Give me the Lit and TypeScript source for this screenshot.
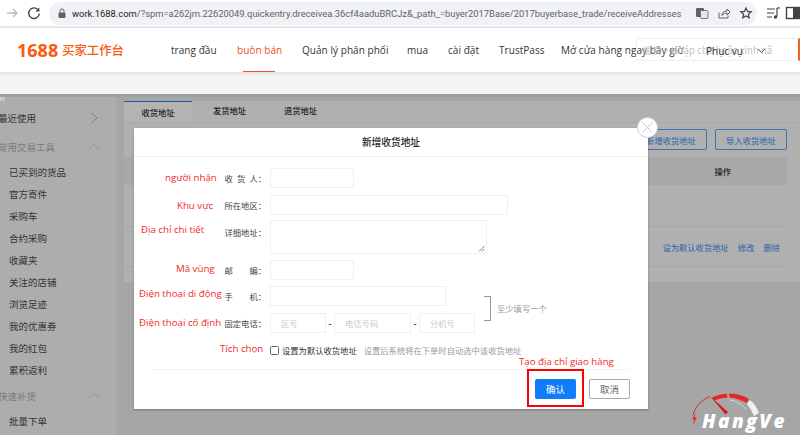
import { LitElement, html, css, svg } from "lit";
import { customElement } from "lit/decorators.js";

@customElement("app-root")
export class AppRoot extends LitElement {
  static styles = css`
    :host { display: block; width: 800px; height: 435px; overflow: hidden; position: relative; background: #a6a6a6; font-family: "Noto Sans CJK SC", "Liberation Sans", sans-serif; }
    .chrome { height: 28px; background: #fff; display: flex; align-items: center; box-sizing: border-box; border-bottom: 2px solid #e6e8eb; }
    .nav-ic { width: 16px; height: 16px; flex: none; }
    .ic-fw { margin-left: 4px; }
    .ic-rl { margin-left: 6px; }
    .omni { margin-left: 7px; flex: 1; height: 23px; background: #f0f2f5; border-radius: 12px; display: flex; align-items: center; padding: 0 4px 0 8px; min-width: 0; margin-right: 8px; }
    .url { font: 9.4px "Roboto", "Liberation Sans", sans-serif; color: #5f6368; white-space: nowrap; margin-left: 5px; flex: 1; overflow: hidden; min-width: 0; }
    .url b { font-weight: 400; color: #202124; }
    .omni-ic { width: 14px; height: 14px; margin-left: 8px; flex: none; }
    .ext { display: flex; gap: 4px; width: 35px; flex: none; overflow: hidden; }
    .header { height: 44px; background: #fff; display: flex; align-items: center; position: relative; box-shadow: 0 2px 4px rgba(0,0,0,.08); z-index: 1; }
    .logo { color: #f95a10; font: 700 18px "Open Sans", sans-serif; margin-left: 17px; width: 40px; }
    .logo-cn { color: #f95a10; font-size: 12.4px; margin-left: 5px; width: 109px; font-weight: 500; flex: none; }
    .hnav { display: flex; align-items: stretch; height: 100%; font: 10px "Open Sans", "Noto Sans", sans-serif; color: #333; letter-spacing: .05px; }
    .hnav a { display: flex; align-items: center; white-space: nowrap; position: relative; }
    .hnav a.on { color: #e8531c; }
    .hnav a.on::after { content: ""; position: absolute; left: 6px; width: 32px; bottom: 0; height: 1.5px; background: #f2541a; }
    .search { position: absolute; left: 636px; top: 10px; width: 164px; height: 23px; box-sizing: border-box; border: 1px solid #efefef; border-right: 2px solid #f06020; display: flex; align-items: center; font-size: 9.6px; color: #c4c4c4; white-space: nowrap; overflow: hidden; padding-left: 5px; }
    .svc { position: absolute; left: 706px; top: 16px; font: 10px "Open Sans", sans-serif; color: #333; display: flex; align-items: center; gap: 14px; }
    .strip { height: 22px; background: #f5f5f5; }
    .page { display: flex; height: 341px; background: #a6a6a6; border-top: 3px solid #a0a0a0; box-sizing: border-box; }
    .side { width: 116px; flex: none; background: #adadad; font-size: 9.5px; color: #333; position: relative; }
    .side .tag { position: absolute; left: 0; top: -3px; font: 8px "Liberation Sans", sans-serif; color: #eee; }
    .grp { height: 22px; display: flex; align-items: center; justify-content: space-between; padding-right: 16px; margin-left: -2px; margin-bottom: 3px; color: #7a7a7a; }
    .grp.first { color: #333; margin-top: 10px; margin-bottom: 7px; }
    .grp svg { width: 12px; height: 12px; flex: none; }
    .item { height: 22px; display: flex; align-items: center; padding-left: 9px; color: #333; }
    .item.gap { margin-bottom: 4px; }
    .main { flex: 1; padding: 4px 0 0 8px; }
    .panel { height: 181px; background: #b0b0b0; }
    .tabs { display: flex; height: 21px; font-size: 8.3px; color: #222; border-bottom: 1px solid #a8a8a8; box-sizing: content-box; }
    .tab { width: 71px; display: flex; align-items: center; justify-content: center; padding-bottom: 3px; box-sizing: border-box; font-weight: 500; }
    .tab.on { width: 68px; margin-right: 2px; border-top: 1px solid #1a5ca8; background: #b3b3b3; padding-bottom: 0; }
    .tools { display: flex; justify-content: flex-end; gap: 8px; padding-right: 13px; margin-top: 6px; }
    .tool { height: 21px; width: 72px; box-sizing: border-box; border: 1px solid #3f72b0; border-radius: 2px; color: #2f62a8; font-size: 8.3px; display: flex; align-items: center; justify-content: center; }
    .thead { height: 28px; margin: 7px 13px 0 0; background: #a8a8a8; font-size: 8.3px; font-weight: 500; color: #222; display: flex; align-items: center; justify-content: flex-end; padding-right: 56px; }
    .row { margin-right: 13px; height: 42px; border-bottom: 1px solid #a6a6a6; box-sizing: border-box; display: flex; align-items: center; justify-content: flex-end; gap: 9px; padding-right: 7px; color: #2f62a8; font-size: 8.3px; }
    .row.low { height: 40px; }
    .modal { position: absolute; left: 134px; top: 128px; width: 514px; height: 281px; background: #fff; box-shadow: 0 1px 2px rgba(0,0,0,.3); color: #555; font-size: 8.3px; }
    .mtitle { height: 29px; box-sizing: border-box; border-bottom: 1px solid #f2f2f2; display: flex; align-items: center; justify-content: center; font-size: 9.7px; font-weight: 500; color: #222; }
    .close { position: absolute; left: 503px; top: -11px; width: 21px; height: 21px; box-sizing: border-box; border-radius: 50%; background: #fff; border: 1px solid #c6cfdd; display: flex; align-items: center; justify-content: center; }
    .close svg { width: 13px; height: 13px; }
    .form { display: grid; grid-template-columns: 136px auto; grid-template-rows: 27px 25px 40px 26px 27px 27px 20px; padding-top: 11px; }
    .lbl { text-align: right; line-height: 20px; height: 20px; white-space: nowrap; color: #444; padding-right: 4px; }
    .lbl.low { padding-top: 2px; }
    .sp { display: flex; justify-content: space-between; width: 41.5px; margin-left: auto; }
    .ctl { display: flex; align-items: flex-start; }
    .in { border: 1px solid #f0f0f0; box-sizing: border-box; height: 20px; background: #fff; display: flex; align-items: center; color: #ccc; flex: none; padding-left: 10px; }
    .w84 { width: 84px; }
    .w238 { width: 238px; }
    .w176 { width: 176px; }
    .ta { width: 217px; height: 34px; position: relative; }
    .ta svg { position: absolute; right: 1px; bottom: 1px; width: 7px; height: 7px; }
    .w56 { width: 56px; }
    .w77 { width: 77px; }
    .dash { color: #333; font-weight: 700; width: 8px; text-align: center; line-height: 20px; }
    .hint { position: absolute; left: 363px; top: 170px; line-height: 20px; color: #999; white-space: nowrap; }
    .brk { position: absolute; left: 350px; top: 168px; width: 7px; height: 25px; border: 1px solid #999; border-left: none; box-sizing: border-box; }
    .chk { width: 9px; height: 9px; box-sizing: border-box; border: 1px solid #666; border-radius: 1.5px; flex: none; background: #fff; }
    .ctl.c2 { align-items: center; gap: 3px; height: 20px; color: #333; white-space: nowrap; }
    .ctl.c2 em { font-style: normal; color: #999; margin-left: 4px; }
    .hr { position: absolute; left: 18px; top: 241px; width: 478px; border-top: 1px solid #f2f2f2; }
    .btns { position: absolute; left: 401px; top: 251px; display: flex; gap: 13px; }
    .btn { width: 41px; height: 20px; border-radius: 2px; box-sizing: border-box; display: flex; align-items: center; justify-content: center; font-size: 9.5px; }
    .btn.ok { background: #0f7dfa; color: #fff; }
    .btn.no { border: 1px solid #aaa; color: #666; }
    .hl { position: absolute; left: 527px; top: 369px; width: 57px; height: 38px; box-sizing: border-box; border: 2px solid #f00; }
    .note { position: absolute; color: #f02a2a; font: 9.7px "Open Sans", "Noto Sans", sans-serif; white-space: nowrap; line-height: 14px; }
    .wm { position: absolute; left: 686px; top: 389px; width: 104px; height: 46px; }
    .wmt { position: absolute; left: 702px; top: 411px; font: italic 800 19px "Open Sans", sans-serif; color: #fff; letter-spacing: 2.4px; line-height: 20px; }
  `;

  render() {
    const nav: [string, number, boolean?][] = [
      ["trang đầu", 66],
      ["buôn bán", 65, true],
      ["Quản lý phân phối", 105],
      ["mua", 41],
      ["cài đặt", 51],
      ["TrustPass", 62],
      ["Mở cửa hàng ngay bây giờ", 170],
    ];
    const items = ["已买到的货品", "官方寄件", "采购车", "合约采购", "收藏夹", "关注的店铺", "浏览足迹", "我的优惠券", "我的红包"];
    const chevUp = svg`<path d="M1 8 L6 3.500 L11 8" fill="none" stroke="#8c8c8c" stroke-width=".8"/>`;
    const chevR = svg`<path d="M3 .5 L9 6 L3 11.500" fill="none" stroke="#777" stroke-width=".8"/>`;
    return html`
      <div class="chrome">
        <svg class="nav-ic ic-fw" viewBox="0 0 16 16"><path d="M3 8h10M9 4l4 4-4 4" fill="none" stroke="#b9bcc0" stroke-width="1.300"/></svg>
        <svg class="nav-ic ic-rl" viewBox="0 0 16 16"><path d="M12.600 5.500A5.300 5.300 0 1 0 13.300 8.600" fill="none" stroke="#444" stroke-width="1.400"/><path d="M13.400 2.600v4h-4z" fill="#444"/></svg>
        <div class="omni">
          <svg width="10" height="11" viewBox="0 0 10 11" style="flex:none"><rect x="1.500" y="4.500" width="7" height="5.500" rx="1" fill="#5f6368"/><path d="M3 4.500V3a2 2 0 0 1 4 0v1.500" fill="none" stroke="#5f6368"/></svg>
          <span class="url"><b>work.1688.com</b>/?spm=a262jm.22620049.quickentry.dreceivea.36cf4aaduBRCJz&amp;_path_=buyer2017Base/2017buyerbase_trade/receiveAddresses</span>
          <svg class="omni-ic" viewBox="0 0 14 14"><rect x="1" y="2" width="8" height="9" rx="1" fill="#5f6368"/><rect x="5.500" y="4.500" width="7.500" height="8" rx="1" fill="#e4e6e9" stroke="#5f6368" stroke-width=".8"/></svg>
          <svg class="omni-ic" viewBox="0 0 14 14"><path d="M2 6.500V12h9V9.500" fill="none" stroke="#5f6368"/><path d="M5 9.500c0-3 2-4.500 5-4.500V3l3 3-3 3V7c-2 0-4 .8-5 2.500z" fill="none" stroke="#5f6368"/></svg>
          <svg class="omni-ic" viewBox="0 0 14 14"><path d="M7 2l1.500 3.400 3.700.4-2.800 2.400.8 3.600L7 9.900l-3.200 1.900.8-3.600L1.800 5.800l3.700-.4z" fill="none" stroke="#444" stroke-width="1.200"/></svg>
        </div>
        <div class="ext">
          <svg class="nav-ic" viewBox="0 0 16 16"><path d="M2 4h8M2 8h7M2 12h5" stroke="#444" stroke-width="1.200"/><path d="M12 3v8.500" stroke="#444" stroke-width="1.200"/><circle cx="10.500" cy="12" r="1.700" fill="#444"/><path d="M12 3h3" stroke="#444" stroke-width="1.200"/></svg>
          <svg class="nav-ic" viewBox="0 0 16 16"><rect x="1.500" y="2.500" width="13" height="11" fill="none" stroke="#444" stroke-width="1.400"/><rect x="8" y="2.500" width="6.500" height="11" fill="#444"/></svg>
        </div>
      </div>
      <div class="header">
        <span class="logo">1688</span><span class="logo-cn">买家工作台</span>
        <div class="hnav">
          ${nav.map((n) => html`<a class="${n[2] ? "on" : ""}" style="width:${n[1]}px">${n[0]}</a>`)}
        </div>
        <div class="search">搜索 &gt; Nhập chữ hoặc xinh nã</div>
        <div class="svc">Phục vụ <svg width="9" height="6" viewBox="0 0 9 6"><path d="M1 1l3.500 3.500L8 1" fill="none" stroke="#555"/></svg></div>
      </div>
      <div class="strip"></div>
      <div class="page">
        <div class="side">
          <span class="tag">n</span>
          <div class="grp first"><span>最近使用</span><svg viewBox="0 0 12 12">${chevR}</svg></div>
          <div class="grp"><span>常用交易工具</span><svg viewBox="0 0 12 12">${chevUp}</svg></div>
          ${items.map((t) => html`<div class="item">${t}</div>`)}
          <div class="item gap">累积返利</div>
          <div class="grp"><span>快速补货</span><svg viewBox="0 0 12 12">${chevUp}</svg></div>
          <div class="item">批量下单</div>
        </div>
        <div class="main">
          <div class="panel">
            <div class="tabs">
              <div class="tab on">收货地址</div><div class="tab">发货地址</div><div class="tab">退货地址</div>
            </div>
            <div class="tools"><div class="tool">新增收货地址</div><div class="tool">导入收货地址</div></div>
            <div class="thead">操作</div>
            <div class="row"></div>
            <div class="row low"><span>设为默认收货地址</span><span>修改</span><span>删除</span></div>
          </div>
        </div>
      </div>

      <div class="modal">
        <div class="mtitle">新增收货地址</div>
        <div class="close"><svg viewBox="0 0 13 13"><path d="M1.500 1.500l10 10M11.500 1.500l-10 10" stroke="#bcc6d6" stroke-width="1"/></svg></div>
        <div class="form">
          <div class="lbl"><span class="sp"><span>收</span><span>货</span><span>人：</span></span></div>
          <div class="ctl"><div class="in w84"></div></div>
          <div class="lbl">所在地区：</div>
          <div class="ctl"><div class="in w238"></div></div>
          <div class="lbl low">详细地址：</div>
          <div class="ctl"><div class="in ta"><svg viewBox="0 0 7 7"><path d="M1 6.500L6.500 1M4 6.500L6.500 4" stroke="#555" stroke-width=".7"/></svg></div></div>
          <div class="lbl"><span class="sp"><span>邮</span><span>编：</span></span></div>
          <div class="ctl"><div class="in w84"></div></div>
          <div class="lbl"><span class="sp"><span>手</span><span>机：</span></span></div>
          <div class="ctl"><div class="in w176"></div></div>
          <div class="lbl">固定电话：</div>
          <div class="ctl"><div class="in w56">区号</div><span class="dash">-</span><div class="in w77">电话号码</div><span class="dash">-</span><div class="in w56">分机号</div></div>
          <div class="lbl"></div>
          <div class="ctl c2"><span class="chk"></span><span>设置为默认收货地址</span><em>设置后系统将在下单时自动选中该收货地址</em></div>
        </div>
        <div class="brk"></div>
        <div class="hint">至少填写一个</div>
        <div class="hr"></div>
        <div class="btns"><div class="btn ok">确认</div><div class="btn no">取消</div></div>
      </div>

      <span class="note" style="left:165px;top:171px">người nhận</span>
      <span class="note" style="left:177px;top:199px">Khu vực</span>
      <span class="note" style="left:141px;top:223px">Địa chỉ chi tiết</span>
      <span class="note" style="left:176px;top:262px">Mã vùng</span>
      <span class="note" style="left:139px;top:287px">Điện thoại di động</span>
      <span class="note" style="left:139px;top:316px">Điện thoại cố định</span>
      <span class="note" style="left:220px;top:342px">Tích chọn</span>
      <span class="note" style="left:519px;top:355px">Tạo địa chỉ giao hàng</span>
      <div class="hl"></div>
      <svg class="wm" viewBox="0 0 104 46">
        <path d="M7 26C9 18 15 11 24 7.500" fill="none" stroke="#e8262a" stroke-width="1"/>
        <path d="M9.500 24L6 30.500l2.500-.3L6.500 36.500 11 28.500l-2.500.3z" fill="#e8262a"/>
        <path d="M26 8.500Q33 5 41 4.500L41.500 8.500Q34 9 28 11.500z" fill="#e8262a"/>
        <path d="M43 4.500Q54 4.500 63 10L60.500 14Q53 9.500 43.500 8.500z" fill="#e8262a"/>
        <path d="M64 11Q70 16 73 24L68 27Q65 20 61 15z" fill="#f1f1f1"/>
        <path d="M44 11Q53 12 60 20" fill="none" stroke="#ddd" stroke-width=".8"/>
        <path d="M24 7L42 23L39.500 25.500z" fill="#d81820"/>
      </svg>
      <span class="wmt">HangVe</span>
    `;
  }
}
